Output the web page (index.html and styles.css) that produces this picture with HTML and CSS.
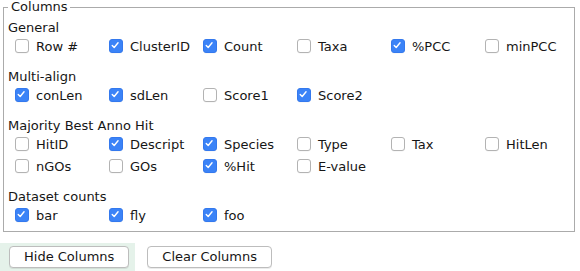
FILE: index.html
```html
<!DOCTYPE html>
<html>
<head>
<meta charset="utf-8">
<link rel="stylesheet" href="styles.css">
</head>
<body>
<fieldset class="cols">
  <legend>Columns</legend>
  <div class="group">
    <div class="group-title">General</div>
    <div class="grid">
      <label class="opt"><span class="box"></span>Row #</label>
      <label class="opt"><span class="box on"><svg viewBox="0 0 14 14"><path d="M3.6 7.4 L5.9 9.8 L10.4 4.2"/></svg></span>ClusterID</label>
      <label class="opt"><span class="box on"><svg viewBox="0 0 14 14"><path d="M3.6 7.4 L5.9 9.8 L10.4 4.2"/></svg></span>Count</label>
      <label class="opt"><span class="box"></span>Taxa</label>
      <label class="opt"><span class="box on"><svg viewBox="0 0 14 14"><path d="M3.6 7.4 L5.9 9.8 L10.4 4.2"/></svg></span>%PCC</label>
      <label class="opt"><span class="box"></span>minPCC</label>
    </div>
  </div>
  <div class="group">
    <div class="group-title">Multi-align</div>
    <div class="grid">
      <label class="opt"><span class="box on"><svg viewBox="0 0 14 14"><path d="M3.6 7.4 L5.9 9.8 L10.4 4.2"/></svg></span>conLen</label>
      <label class="opt"><span class="box on"><svg viewBox="0 0 14 14"><path d="M3.6 7.4 L5.9 9.8 L10.4 4.2"/></svg></span>sdLen</label>
      <label class="opt"><span class="box"></span>Score1</label>
      <label class="opt"><span class="box on"><svg viewBox="0 0 14 14"><path d="M3.6 7.4 L5.9 9.8 L10.4 4.2"/></svg></span>Score2</label>
    </div>
  </div>
  <div class="group">
    <div class="group-title">Majority Best Anno Hit</div>
    <div class="grid">
      <label class="opt"><span class="box"></span>HitID</label>
      <label class="opt"><span class="box on"><svg viewBox="0 0 14 14"><path d="M3.6 7.4 L5.9 9.8 L10.4 4.2"/></svg></span>Descript</label>
      <label class="opt"><span class="box on"><svg viewBox="0 0 14 14"><path d="M3.6 7.4 L5.9 9.8 L10.4 4.2"/></svg></span>Species</label>
      <label class="opt"><span class="box"></span>Type</label>
      <label class="opt"><span class="box"></span>Tax</label>
      <label class="opt"><span class="box"></span>HitLen</label>
      <label class="opt"><span class="box"></span>nGOs</label>
      <label class="opt"><span class="box"></span>GOs</label>
      <label class="opt"><span class="box on"><svg viewBox="0 0 14 14"><path d="M3.6 7.4 L5.9 9.8 L10.4 4.2"/></svg></span>%Hit</label>
      <label class="opt"><span class="box"></span>E-value</label>
    </div>
  </div>
  <div class="group">
    <div class="group-title">Dataset counts</div>
    <div class="grid">
      <label class="opt"><span class="box on"><svg viewBox="0 0 14 14"><path d="M3.6 7.4 L5.9 9.8 L10.4 4.2"/></svg></span>bar</label>
      <label class="opt"><span class="box on"><svg viewBox="0 0 14 14"><path d="M3.6 7.4 L5.9 9.8 L10.4 4.2"/></svg></span>fly</label>
      <label class="opt"><span class="box on"><svg viewBox="0 0 14 14"><path d="M3.6 7.4 L5.9 9.8 L10.4 4.2"/></svg></span>foo</label>
    </div>
  </div>
</fieldset>
<div class="actions">
  <div class="highlight"><button class="btn">Hide Columns</button></div>
  <button class="btn">Clear Columns</button>
</div>
</body>
</html>
```
FILE: styles.css
```css
html, body {
  margin: 0;
  padding: 0;
  background: #ffffff;
}
body {
  font-family: "DejaVu Sans", "Liberation Sans", sans-serif;
  font-size: 13px;
  color: #161616;
  width: 580px;
}
.cols {
  margin: 0 5px 0 3px;
  border: 1px solid #ababab;
  padding: 3px 0 5px 4px;
  min-width: 0;
}
.cols legend {
  padding: 0 2px 0 3px;
  line-height: 14px;
}
.group + .group {
  margin-top: 9px;
}
.group-title {
  line-height: 15px;
  padding-top: 3px;
}
.grid {
  display: grid;
  grid-template-columns: repeat(6, 94px);
  grid-auto-rows: 22px;
  padding-left: 7px;
}
.opt {
  display: flex;
  align-items: center;
  white-space: nowrap;
}
.box {
  width: 12px;
  height: 12px;
  border: 1px solid #b3b3b3;
  border-radius: 3px;
  background: #ffffff;
  margin-right: 7px;
  flex: none;
  display: flex;
  box-shadow: 0 0.5px 0 rgba(0,0,0,0.06);
}
.box.on {
  background: #3b83f7;
  border-color: #3479ee;
}
.box svg {
  width: 12px;
  height: 12px;
}
.box svg path {
  fill: none;
  stroke: #ffffff;
  stroke-width: 1.6;
  stroke-linecap: round;
  stroke-linejoin: round;
  transform: translate(-1px, -1px);
}
.actions {
  display: flex;
  align-items: center;
  margin-top: 11px;
}
.highlight {
  background: #e5f2ea;
  padding: 3px 6px 3px 9px;
  display: flex;
}
.btn {
  font-family: "DejaVu Sans", "Liberation Sans", sans-serif;
  font-size: 13px;
  color: #161616;
  background: #ffffff;
  border: 1px solid #bdbdbd;
  border-radius: 4px;
  height: 22px;
  padding: 0 14px;
  box-shadow: 0 1px 0 rgba(0,0,0,0.08);
  line-height: 20px;
}
.actions > .btn {
  margin-left: 12px;
}
```
